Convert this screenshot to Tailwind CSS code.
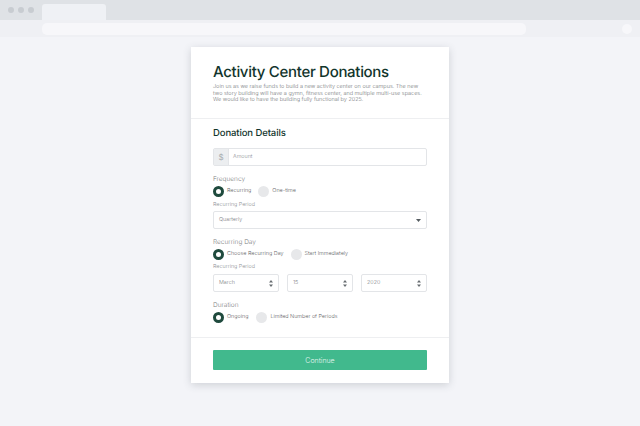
<!DOCTYPE html>
<html lang="en">
<head>
  <meta charset="UTF-8">
  <meta name="viewport" content="width=device-width, initial-scale=1.0">
  <title>Activity Center Donations</title>
  <script src="https://cdn.jsdelivr.net/npm/@tailwindcss/browser@4"></script>
</head>
<body class="h-[426px] w-[640px] overflow-hidden bg-[#f3f4f8] font-['Inter',sans-serif] antialiased [text-rendering:geometricPrecision]">
  <!-- browser chrome -->
  <div class="flex h-[20px] bg-[#dfe2e6] pl-[8px]">
    <div class="flex gap-[4px] pt-[7px]">
      <span class="h-[6px] w-[6px] rounded-full bg-[#c8ccd1]"></span>
      <span class="h-[6px] w-[6px] rounded-full bg-[#c8ccd1]"></span>
      <span class="h-[6px] w-[6px] rounded-full bg-[#c8ccd1]"></span>
    </div>
    <div class="ml-[8px] mt-[4px] h-[16px] w-[64px] rounded-t-[3px] bg-[#eff1f5]"></div>
  </div>
  <div class="flex h-[17px] items-center justify-between bg-[#eff0f4] pl-[42px] pr-[8px]">
    <div class="h-[12px] w-[484px] rounded-[5px] bg-[#f7f7fa]"></div>
    <div class="h-[10px] w-[10px] rounded-full bg-[#f7f7fa]"></div>
  </div>

  <!-- card -->
  <div class="mx-auto mt-[10px] h-[336px] w-[258px] bg-white text-[#7c7e80] shadow-[0_2px_8px_rgba(60,70,80,0.2)]">
    <div class="h-[72px] border-b border-[#eeeff1] px-[22px] pt-[15px]">
      <h1 class="text-[15px] leading-[19px] font-medium tracking-[-0.3px] text-[#12352c]">Activity Center Donations</h1>
      <p class="mt-[3px] text-[5.5px] leading-[6.5px] font-light text-[#74777a]">Join us as we raise funds to build a new activity center on our campus. The new two story building will have a gymn, fitness center, and multiple multi-use spaces. We would like to have the building fully functional by 2025.</p>
    </div>

    <div class="h-[219px] border-b border-[#eeeff1] px-[22px] pt-[9px]">
      <h2 class="text-[9.5px] leading-[12px] font-medium tracking-[-0.1px] text-[#12352c]">Donation Details</h2>

      <div class="mt-[8px] flex h-[18px] rounded-[2px] border border-[#e3e5e8]">
        <div class="flex w-[14px] items-center justify-center bg-[#eceef0] text-[8px] text-[#a6abaf]">$</div>
        <div class="flex items-center border-l border-[#e3e5e8] pl-[4px] text-[5.4px] font-light text-[#8e9296]">Amount</div>
      </div>

      <p class="mt-[9px] text-[6.5px] leading-[8px] font-light">Frequency</p>
      <div class="mt-[3px] flex items-center">
        <span class="h-[11px] w-[11px] rounded-full border-[3px] border-[#1f4a3d] bg-white"></span>
        <span class="ml-[3px] text-[5.4px] font-light text-[#5f6366]">Recurring</span>
        <span class="ml-[7px] h-[11px] w-[11px] rounded-full bg-[#e7e8ea]"></span>
        <span class="ml-[3px] text-[5.4px] font-light text-[#5f6366]">One-time</span>
      </div>
      <p class="mt-[5px] text-[5.4px] leading-[7px] font-light text-[#8e9296]">Recurring Period</p>
      <div class="mt-[2px] flex h-[18px] items-center justify-between rounded-[2px] border border-[#e3e5e8] pl-[5px] pr-[5px] text-[5.4px] font-light text-[#7d8184]">
        Quarterly
        <svg width="5" height="3" viewBox="0 0 5 3"><path d="M0 0h5L2.5 3z" fill="#555c60"/></svg>
      </div>

      <p class="mt-[9px] text-[6.5px] leading-[8px] font-light">Recurring Day</p>
      <div class="mt-[3px] flex items-center">
        <span class="h-[11px] w-[11px] rounded-full border-[3px] border-[#1f4a3d] bg-white"></span>
        <span class="ml-[3px] text-[5.4px] font-light text-[#5f6366]">Choose Recurring Day</span>
        <span class="ml-[7px] h-[11px] w-[11px] rounded-full bg-[#e7e8ea]"></span>
        <span class="ml-[3px] text-[5.4px] font-light text-[#5f6366]">Start Immediately</span>
      </div>
      <p class="mt-[4px] text-[5.4px] leading-[7px] font-light text-[#8e9296]">Recurring Period</p>
      <div class="mt-[3px] grid grid-cols-3 gap-[8px] text-[5.4px] font-light text-[#7d8184]">
        <div class="flex h-[18px] items-center justify-between rounded-[2px] border border-[#e3e5e8] pl-[5px] pr-[5px]">
          March
          <svg width="4" height="7" viewBox="0 0 4 7"><path d="M2 0L4 2.6H0zM0 4.4h4L2 7z" fill="#666c70"/></svg>
        </div>
        <div class="flex h-[18px] items-center justify-between rounded-[2px] border border-[#e3e5e8] pl-[5px] pr-[5px]">
          15
          <svg width="4" height="7" viewBox="0 0 4 7"><path d="M2 0L4 2.6H0zM0 4.4h4L2 7z" fill="#666c70"/></svg>
        </div>
        <div class="flex h-[18px] items-center justify-between rounded-[2px] border border-[#e3e5e8] pl-[5px] pr-[5px]">
          2020
          <svg width="4" height="7" viewBox="0 0 4 7"><path d="M2 0L4 2.6H0zM0 4.4h4L2 7z" fill="#666c70"/></svg>
        </div>
      </div>

      <p class="mt-[9px] text-[6.5px] leading-[8px] font-light">Duration</p>
      <div class="mt-[3px] flex items-center">
        <span class="h-[11px] w-[11px] rounded-full border-[3px] border-[#1f4a3d] bg-white"></span>
        <span class="ml-[3px] text-[5.4px] font-light text-[#5f6366]">Ongoing</span>
        <span class="ml-[8px] h-[11px] w-[11px] rounded-full bg-[#e7e8ea]"></span>
        <span class="ml-[3px] text-[5.4px] font-light text-[#5f6366]">Limited Number of Periods</span>
      </div>
    </div>

    <div class="px-[22px] pt-[12px]">
      <button class="flex h-[20px] w-full items-center justify-center rounded-[1px] bg-[#41b98d] pt-[2px] text-[7px] font-light text-[#e3f5ee]">Continue</button>
    </div>
  </div>
</body>
</html>
